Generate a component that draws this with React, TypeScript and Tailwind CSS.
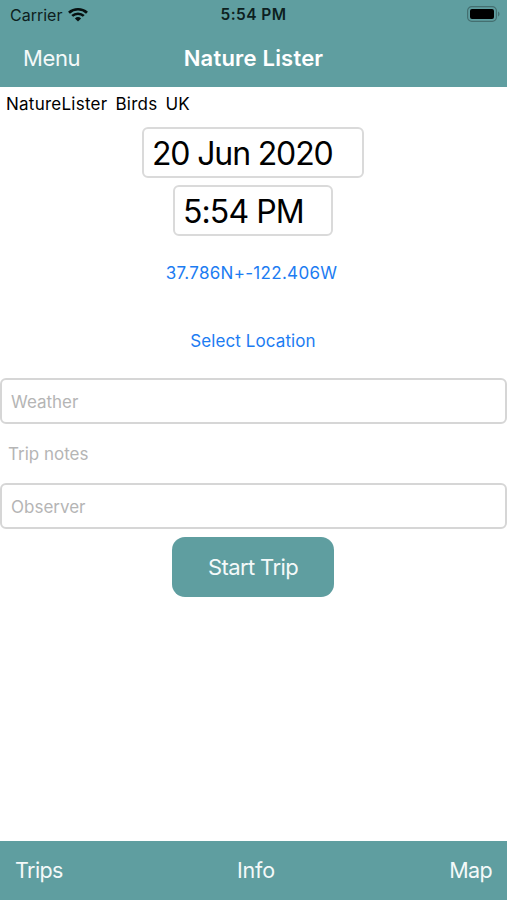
import type { ReactNode } from 'react';

function WifiIcon() {
  return (
    <svg width="20" height="14" viewBox="0 0 20 15" preserveAspectRatio="none" fill="none" stroke="#071010" aria-hidden="true">
      <path d="M1 5.1a12.9 12.9 0 0 1 18 0" strokeWidth="2.7" />
      <path d="M4.2 8.5a8.3 8.3 0 0 1 11.6 0" strokeWidth="2.6" />
      <path d="M10 14.4 6.9 11.2a4.5 4.5 0 0 1 6.2 0Z" fill="#071010" stroke="none" />
    </svg>
  );
}

function BatteryIcon() {
  return (
    <svg width="33" height="16" viewBox="0 0 33 16" fill="none" aria-hidden="true">
      <rect x="0.6" y="0.6" width="28.8" height="14.8" rx="4.2" stroke="#446f70" strokeWidth="1.2" />
      <rect x="3" y="3" width="24" height="10" rx="2" fill="#000" />
      <path d="M31 5.5v5c1-.4 1.5-1.4 1.5-2.5S32 5.9 31 5.5Z" fill="#446f70" />
    </svg>
  );
}

function PickerBox({ children, className }: { children: ReactNode; className: string }) {
  return (
    <button className={`h-[51px] rounded-md border-2 border-[#dadada] pt-0.5 pl-2 text-left whitespace-nowrap text-[32px] leading-[45px] text-black ${className}`}>
      {children}
    </button>
  );
}

export default function App() {
  return (
    <main className="flex h-[900px] w-[507px] flex-col overflow-hidden bg-white font-['Inter',sans-serif]">
      {/* Status bar */}
      <div className="grid h-7 shrink-0 grid-cols-3 items-center bg-[#5f9ea0] pt-0.5 text-[#0d1f20]">
        <div className="flex items-center gap-[6px] pl-2.5">
          <span className="text-[16px] leading-5">Carrier</span>
          <WifiIcon />
        </div>
        <span className="text-center text-[15.5px] leading-5 font-semibold tracking-[0.4px]">5:54 PM</span>
        <div className="flex justify-end pr-[7px] pb-0.5">
          <BatteryIcon />
        </div>
      </div>

      {/* Navigation bar */}
      <header className="grid h-[59px] shrink-0 grid-cols-3 items-center bg-[#5f9ea0] pt-px text-[22px] text-[#f4f9f9]">
        <button className="pl-[23px] text-left tracking-[-0.4px]">Menu</button>
        <h1 className="text-center whitespace-nowrap font-semibold tracking-[0.2px] text-white">Nature Lister</h1>
      </header>

      {/* Trip form */}
      <section className="flex flex-1 flex-col items-center">
        <div className="flex h-10 w-full gap-2 pt-[5px] pl-1.5 text-[17px] leading-6 tracking-[0.25px] text-black">
          <span>NatureLister</span>
          <span>Birds</span>
          <span>UK</span>
        </div>
        <PickerBox className="mr-px w-[222px] tracking-[-1.15px]">20 Jun 2020</PickerBox>
        <PickerBox className="mt-[7px] mr-px w-[160px] tracking-[-0.9px]">5:54 PM</PickerBox>
        <button className="mt-[25px] mr-1 text-[17px] leading-6 tracking-[0.3px] text-[#1c7cf2]">37.786N+-122.406W</button>
        <button className="mt-[44px] mr-px text-[17px] leading-6 tracking-[0.1px] text-[#1c7cf2]">Select Location</button>
        <input
          className="mt-[25px] h-[46px] w-full rounded-md border-2 border-[#d6d6d6] px-[9px] pt-px text-[17px] placeholder:text-[#b5b5b5]"
          placeholder="Weather"
        />
        <textarea
          className="h-[60px] w-full resize-none px-2 pt-[18px] text-[17px] leading-6 placeholder:text-[#b5b5b5]"
          placeholder="Trip notes"
        />
        <input
          className="-mt-px h-[46px] w-full rounded-md border-2 border-[#d6d6d6] px-[9px] pt-px text-[17px] placeholder:text-[#b5b5b5]"
          placeholder="Observer"
        />
        <button className="mt-2 mr-px h-[60px] w-[162px] rounded-[13px] bg-[#5f9ea0] text-[22px] tracking-[-0.6px] text-[#f4f9f9]">Start Trip</button>
      </section>

      {/* Toolbar */}
      <footer className="flex h-[59px] shrink-0 items-center justify-between bg-[#5f9ea0] px-[15px] text-[21.5px] tracking-[-0.6px] text-[#f4f9f9]">
        <button>Trips</button>
        <button className="tracking-[-0.2px]">Info</button>
        <button>Map</button>
      </footer>
    </main>
  );
}
